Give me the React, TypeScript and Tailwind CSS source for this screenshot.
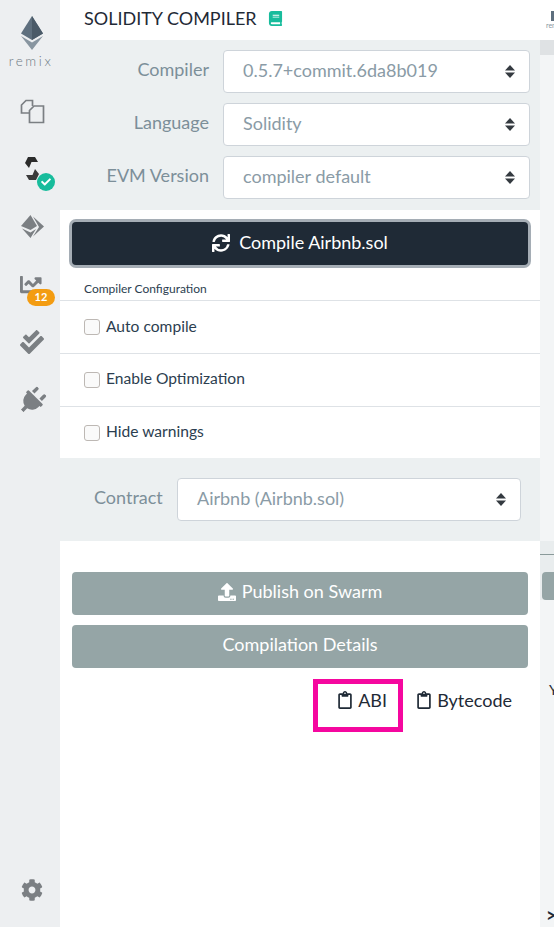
import { ReactNode } from 'react';
import { FaBook, FaCheck, FaCheckDouble, FaChartLine, FaCog, FaPlug, FaRegClipboard, FaSync, FaUpload } from 'react-icons/fa';

function GripSelect({ value, widthClass }: { value: string; widthClass: string }) {
  return (
    <div className={`${widthClass} h-[43px] bg-white border border-[#ced4da] rounded-[4px] flex items-center justify-between pl-[19px] pr-[14px] text-[18px] text-[#8a9ba6]`}>
      <span className="pb-[2px]">{value}</span>
      <svg width="10" height="13" viewBox="0 0 10 13" fill="#343a40">
        <path d="M5 0 10 5.5H0z" />
        <path d="M5 13 0 7.5H10z" />
      </svg>
    </div>
  );
}

function FormRow({ label, value }: { label: string; value: string }) {
  return (
    <div className="flex items-center h-[43px] mb-[10px]">
      <div className="w-[135px] mr-[14px] text-right text-[18px] text-[#7c8f99] pb-[4px]">{label}</div>
      <GripSelect value={value} widthClass="w-[307px]" />
    </div>
  );
}

function CheckRow({ label, className, labelClass }: { label: string; className: string; labelClass: string }) {
  return (
    <div className={`flex items-center pl-[24px] gap-[6px] border-t border-[#dee2e6] ${className}`}>
      <span className="w-[16px] h-[16px] bg-[#fafafa] border border-[#bdb8b4] rounded-[3px]" />
      <span className={`text-[15.6px] text-[#2c3e50] ${labelClass}`}>{label}</span>
    </div>
  );
}

function GreyButton({ children }: { children: ReactNode }) {
  return (
    <div className="h-[43px] bg-[#95a5a6] rounded-[4px] flex items-center justify-center gap-[6px] pb-[4px] text-[18px] text-white">
      {children}
    </div>
  );
}

function RailIcon({ children, className }: { children: ReactNode; className: string }) {
  return <div className={`flex justify-center pl-[4px] ${className}`}>{children}</div>;
}

export default function App() {
  return (
    <div className="w-[554px] h-[927px] flex overflow-hidden bg-white font-['Lato','Open_Sans',sans-serif]">
      {/* icon rail */}
      <div className="w-[60px] shrink-0 bg-[#edeff1] flex flex-col relative">
        <RailIcon className="pt-[16px]">
          <svg width="22" height="34" viewBox="0 0 22 34">
            <path d="M11 0 0 17.5 11 24 22 17.5z" fill="#5e6f7e" />
            <path d="M11 0 11 24 22 17.5z" fill="#4a5a68" />
            <path d="M0 20 11 34 22 20 11 26.5z" fill="#8895a0" />
          </svg>
        </RailIcon>
        <div className="text-center text-[13.5px] leading-[14px] tracking-[2.6px] text-[#6d7a84] font-light mt-[4px] pl-[2px]">remix</div>
        <RailIcon className="mt-[31px]">
          <svg width="25" height="25" viewBox="0 0 25 25" fill="none" stroke="#7b7f83" strokeWidth="1.7">
            <path d="M9 14H1.5V6L6 1.5H12.5V7" />
            <path d="M9.5 23.5V11.5L14 7H23.5V23.5z" />
          </svg>
        </RailIcon>
        <RailIcon className="mt-[32px] relative">
          <svg width="16" height="25" viewBox="0 0 16 25">
            <path d="M4 1H11L14 6H7.5L5 12 1 7z" fill="#2b2b2b" />
            <path d="M12 24H5L2 19H8.5L11 13 15 18z" fill="#3a3a3a" />
          </svg>
          <span className="absolute left-[37px] top-[17px] w-[18px] h-[18px] rounded-full bg-[#18bc9c] flex items-center justify-center text-white">
            <FaCheck size={10} />
          </span>
        </RailIcon>
        <RailIcon className="mt-[34px]">
          <svg width="24" height="23" viewBox="0 0 24 23" fill="#7b7f83">
            <path d="M10.5 0 1 11 10.5 15 17 11z" />
            <path d="M2 13.5 10.5 17.5 16 14 10.5 23z" />
            <path d="M13 1.5 24 11.5 13 21.5 19 12z" />
          </svg>
        </RailIcon>
        <RailIcon className="mt-[35px] relative">
          <span className="text-[#7b7f83] -ml-[1px]"><FaChartLine size={23} className="block" /></span>
          <span className="absolute left-[27px] top-[16px] w-[28px] h-[17px] rounded-full bg-[#f39c12] text-white text-[11px] font-bold flex items-center justify-center">12</span>
        </RailIcon>
        <RailIcon className="mt-[34px] text-[#7b7f83]">
          <FaCheckDouble size={24} />
        </RailIcon>
        <RailIcon className="mt-[33px] text-[#7b7f83]">
          <FaPlug size={28} className="rotate-45" />
        </RailIcon>
        <div className="absolute left-[21px] top-[879px] text-[#7b7f83]">
          <FaCog size={22} />
        </div>
      </div>

      {/* compiler panel */}
      <div className="w-[480px] shrink-0 flex flex-col">
        <div className="h-[40px] flex items-center pl-[24px] gap-[11px] pb-[4px] text-[18px] text-[#1f2a36]">
          <span>SOLIDITY COMPILER</span>
          <FaBook size={15} className="text-[#18bc9c]" />
        </div>
        <div className="h-[170px] bg-[#ecf0f1] pt-[10px] pl-[14px]">
          <FormRow label="Compiler" value="0.5.7+commit.6da8b019" />
          <FormRow label="Language" value="Solidity" />
          <FormRow label="EVM Version" value="compiler default" />
        </div>
        <div className="pt-[12px] px-[12px]">
          <div className="h-[43px] bg-[#1f2a36] rounded-[4px] ring-[3px] ring-[#a5adb5] flex items-center justify-center gap-[9px] pb-[2px] text-[18px] text-white">
            <FaSync size={18} />
            <span>Compile Airbnb.sol</span>
          </div>
        </div>
        <div className="h-[35px] pl-[24px] flex items-end pb-[2px] text-[12px] text-[#2c3e50]">Compiler Configuration</div>
        <CheckRow label="Auto compile" className="h-[53px]" labelClass="pb-[1px]" />
        <CheckRow label="Enable Optimization" className="h-[53px]" labelClass="pb-[3px]" />
        <CheckRow label="Hide warnings" className="h-[52px]" labelClass="pb-[2px]" />
        <div className="h-[83px] bg-[#ecf0f1] flex items-center pl-[34px]">
          <span className="text-[18px] text-[#7c8f99] w-[83px] pb-[5px]">Contract</span>
          <GripSelect value="Airbnb (Airbnb.sol)" widthClass="w-[344px]" />
        </div>
        <div className="pt-[31px] px-[12px] flex flex-col gap-[10px]">
          <GreyButton>
            <FaUpload size={18} />
            <span>Publish on Swarm</span>
          </GreyButton>
          <GreyButton>Compilation Details</GreyButton>
        </div>
        <div className="flex justify-end items-start pr-[28px] mt-[11px] text-[18px] text-[#1f2a36]">
          <div className="w-[90px] h-[53px] flex items-start gap-[4px] pl-[18px] pt-[3px] border-[5px] border-[#f5079f]">
            <FaRegClipboard size={18} className="mt-[4px]" />
            <span>ABI</span>
          </div>
          <div className="flex items-start pt-[8px] pl-[12px] gap-[4px]">
            <FaRegClipboard size={18} className="mt-[4px]" />
            <span>Bytecode</span>
          </div>
        </div>
      </div>

      {/* next panel showing at the right edge */}
      <div className="w-[14px] shrink-0 flex flex-col bg-[#f3f5f6] text-[14px] text-[#1f2a36] overflow-hidden">
        <div className="h-[40px] bg-white flex flex-col pt-[11px] shrink-0">
          <span className="w-[3px] h-[10px] ml-[11px] bg-[#5e6f7e]" />
          <span className="text-[7px] leading-[9px] ml-[6px] text-[#8895a0] whitespace-nowrap">rem</span>
        </div>
        <div className="h-[15px] bg-[#dfe2e4] shrink-0" />
        <div className="h-[486px] shrink-0" />
        <div className="h-[14px] bg-[#e9edee] border-b border-[#8a9a9a] shrink-0" />
        <div className="h-[45px] bg-[#e9edee] pt-[17px] pl-[2px] shrink-0">
          <div className="h-[28px] bg-[#95a5a6] rounded-l-[4px]" />
        </div>
        <div className="pt-[80px] pl-[9px] leading-[20px] whitespace-nowrap">Y</div>
        <div className="mt-auto pb-[1px] leading-[22px] pl-[6px] text-[18px] font-bold">&gt;</div>
      </div>
    </div>
  );
}
